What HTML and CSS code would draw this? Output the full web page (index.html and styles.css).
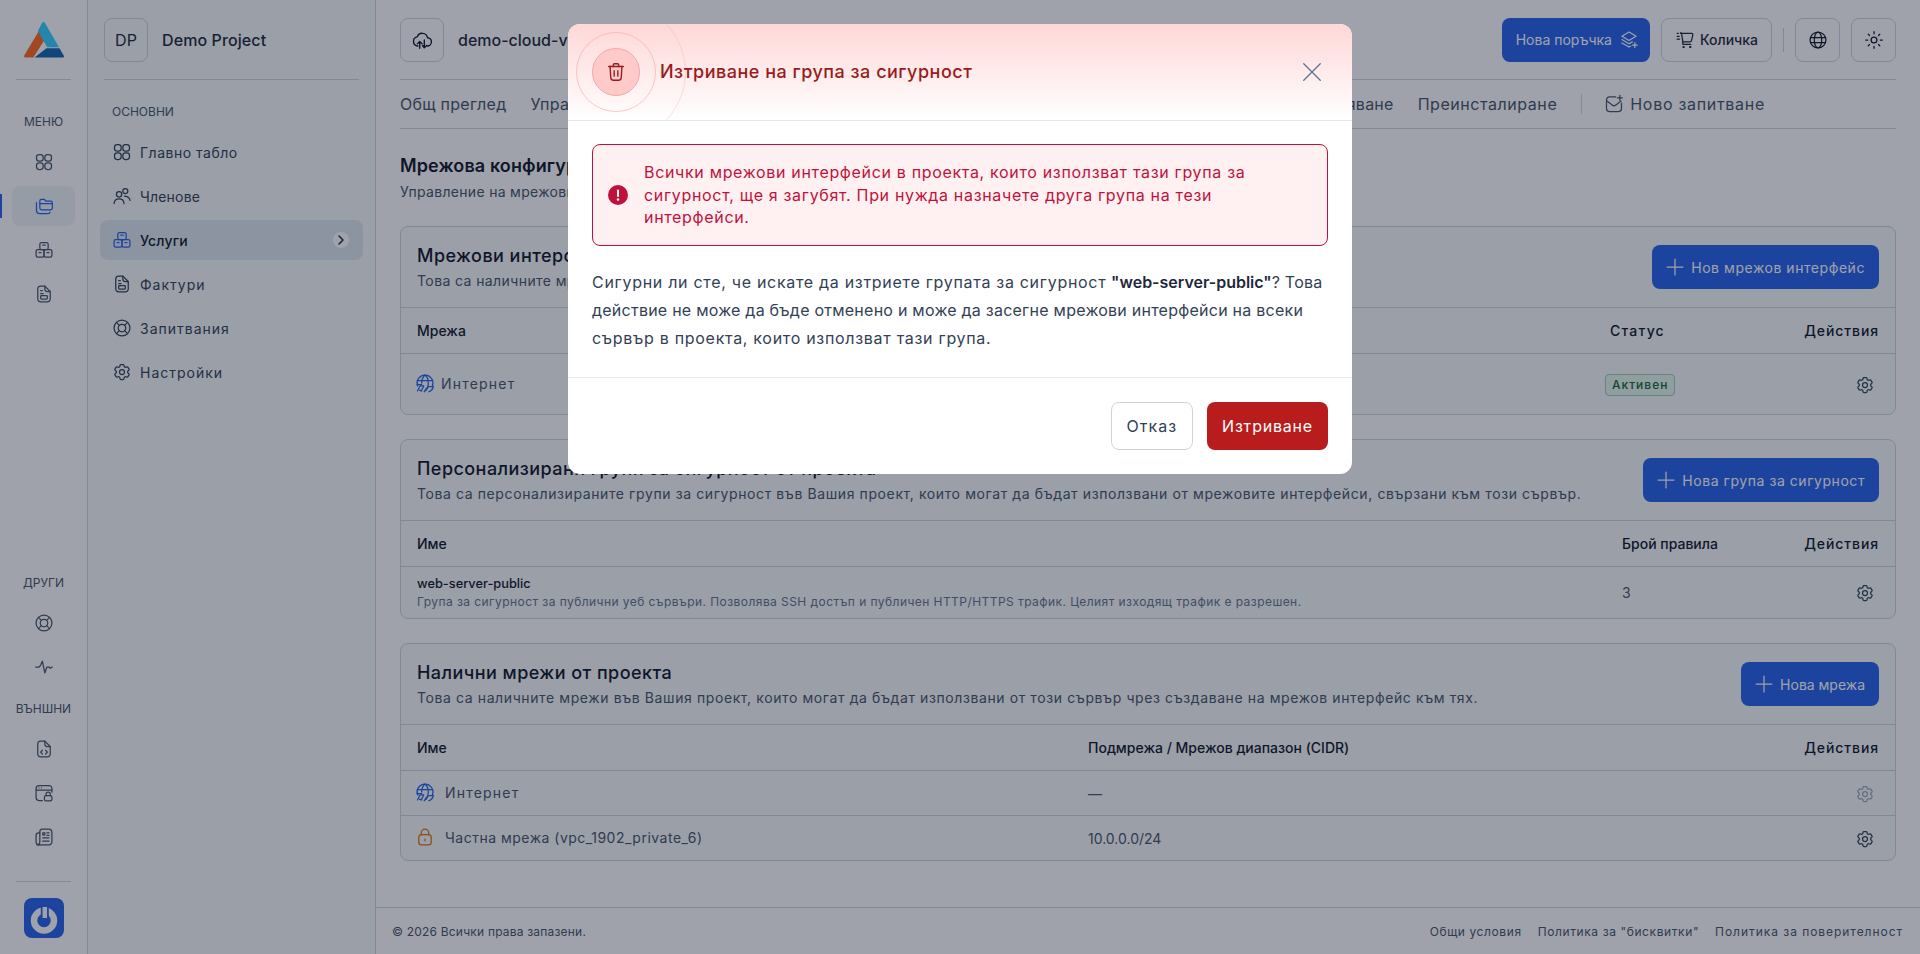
FILE: index.html
```html
<!DOCTYPE html>
<html lang="bg">
  <head>
    <meta charset="UTF-8" />
    <meta name="viewport" content="width=device-width, initial-scale=1.0" />
    <title>Мрежова конфигурация</title>
    <link rel="stylesheet" href="styles.css">
  </head>
  <body>
    <svg class="sprite" xmlns="http://www.w3.org/2000/svg">
      <symbol id="i-grid" viewBox="0 0 24 24"><rect x="3" y="3" width="8" height="8" rx="3.2"/><rect x="13" y="3" width="8" height="8" rx="3.2"/><rect x="3" y="13" width="8" height="8" rx="3.2"/><rect x="13" y="13" width="8" height="8" rx="3.2"/></symbol>
      <symbol id="i-folders" viewBox="0 0 24 24"><path d="M7 8.500V6a2 2 0 0 1 2-2h3.500l1.600 2H20a2 2 0 0 1 2 2v6.500a2 2 0 0 1-2 2H9a2 2 0 0 1-2-2z"/><path d="M7 9h15"/><path d="M3 8v9.500A3.500 3.500 0 0 0 6.500 21H17a2.500 2.500 0 0 0 2.300-1.500"/></symbol>
      <symbol id="i-boxes" viewBox="0 0 24 24"><rect x="7" y="3" width="10" height="8.500" rx="2"/><rect x="2.500" y="11.500" width="9.500" height="9" rx="2"/><rect x="12" y="11.500" width="9.500" height="9" rx="2"/><path d="M10.500 6h3M6 15h2.500M15.500 15H18"/></symbol>
      <symbol id="i-invoice" viewBox="0 0 24 24"><path d="M13 2.500H8A3.500 3.500 0 0 0 4.500 6v12A3.500 3.500 0 0 0 8 21.500h8a3.500 3.500 0 0 0 3.500-3.500V9z"/><path d="M13 2.500V6a3 3 0 0 0 3 3h3.500"/><path d="M8 8h2M8 11.500h3"/><rect x="8" y="14" width="8" height="4" rx="1"/></symbol>
      <symbol id="i-users" viewBox="0 0 24 24"><circle cx="8.500" cy="10" r="3.200"/><path d="M2.500 21c.3-3.600 2.800-5.500 6-5.500s5.700 1.900 6 5.500"/><circle cx="16" cy="6" r="3"/><path d="M15 12.200c.4.100.7.100 1 .1 3.200 0 5.200 1.700 5.700 5"/></symbol>
      <symbol id="i-lifebuoy" viewBox="0 0 24 24"><circle cx="12" cy="12" r="9.500"/><circle cx="12" cy="12" r="4.500"/><path d="M5.300 5.300l3.500 3.500M18.700 5.300l-3.500 3.500M5.300 18.700l3.500-3.500M18.700 18.700l-3.500-3.500"/></symbol>
      <symbol id="i-gear" viewBox="0 0 24 24"><path d="M9.594 3.940c.09-.542.56-.94 1.110-.94h2.593c.55 0 1.020.398 1.110.94l.213 1.281c.063.374.313.686.645.870.074.040.147.083.22.127.325.196.72.257 1.075.124l1.217-.456a1.125 1.125 0 0 1 1.370.49l1.296 2.247a1.125 1.125 0 0 1-.26 1.431l-1.003.827c-.293.241-.438.613-.43.992a7.723 7.723 0 0 1 0 .255c-.008.378.137.75.43.991l1.004.827c.424.35.534.955.26 1.430l-1.298 2.247a1.125 1.125 0 0 1-1.369.491l-1.217-.456c-.355-.133-.75-.072-1.076.124a6.470 6.470 0 0 1-.22.128c-.331.183-.581.495-.644.869l-.213 1.281c-.09.543-.56.94-1.110.94h-2.594c-.55 0-1.019-.398-1.110-.94l-.213-1.281c-.062-.374-.312-.686-.644-.870a6.520 6.520 0 0 1-.22-.127c-.325-.196-.72-.257-1.076-.124l-1.217.456a1.125 1.125 0 0 1-1.369-.49l-1.297-2.247a1.125 1.125 0 0 1 .26-1.431l1.004-.827c.292-.24.437-.613.43-.991a6.932 6.932 0 0 1 0-.255c.007-.38-.138-.751-.43-.992l-1.004-.827a1.125 1.125 0 0 1-.26-1.430l1.297-2.247a1.125 1.125 0 0 1 1.370-.491l1.216.456c.356.133.751.072 1.076-.124.072-.044.146-.086.22-.128.332-.183.582-.495.644-.869l.214-1.280z"/><circle cx="12" cy="12" r="3"/></symbol>
      <symbol id="i-pulse" viewBox="0 0 24 24"><path d="M2 12h4l1.800-1.800L10 5l3 14 2.500-7H18l1.500 1.500L22 12"/></symbol>
      <symbol id="i-filecode" viewBox="0 0 24 24"><path d="M13 2.500H8A3.500 3.500 0 0 0 4.500 6v12A3.500 3.500 0 0 0 8 21.500h8a3.500 3.500 0 0 0 3.500-3.500V9z"/><path d="M13 2.500V6a3 3 0 0 0 3 3h3.500"/><path d="M10 13.500l-2 2.300 2 2.200M14 13.500l2 2.300-2 2.200"/></symbol>
      <symbol id="i-browserlock" viewBox="0 0 24 24"><path d="M10 21H6a3.500 3.500 0 0 1-3.500-3.500v-11A3.500 3.500 0 0 1 6 3h12a3.500 3.500 0 0 1 3.500 3.500V11"/><path d="M2.500 8.500h19"/><path d="M6 5.800h.01M9 5.800h.01"/><rect x="12.500" y="15" width="9" height="6.500" rx="2"/><path d="M14.500 15v-1.500a2.500 2.500 0 0 1 5 0V15"/></symbol>
      <symbol id="i-news" viewBox="0 0 24 24"><path d="M7 21.500h11a3.500 3.500 0 0 0 3.500-3.500V6A3.500 3.500 0 0 0 18 2.500H10A3 3 0 0 0 7 5.500V18a3.500 3.500 0 0 1-3.500 3.500h3.500"/><path d="M7 7H5.500a3 3 0 0 0-3 3v8a3.500 3.500 0 0 0 3.500 3.500"/><path d="M10.500 7H13v2.500h-2.500zM15.500 7H18M15.500 10H18M10.500 13H18M10.500 17H18"/></symbol>
      <symbol id="i-cloud" viewBox="0 0 24 24"><path d="M7.500 18.500A5 5 0 0 1 6.800 8.600 5.800 5.800 0 0 1 18 9.500a4.500 4.500 0 0 1-.5 9"/><path d="M9.500 21v-7.500M7 16l2.500-2.500L12 16M14.500 12v8M12.500 18l2 2.500 2.500-2.500"/></symbol>
      <symbol id="i-layers" viewBox="0 0 24 24"><path d="M12 2.500l8.500 5-8.500 5-8.500-5z"/><path d="M3.500 11.500l8.500 5 4-2.300M3.500 15.500l8.500 5 2-1.200"/><path d="M19 15v6M16 18h6"/></symbol>
      <symbol id="i-cart" viewBox="0 0 24 24"><path d="M6.500 4H20c1 0 1.700.9 1.400 1.900l-1.500 6.500a2.500 2.500 0 0 1-2.400 1.900H9.500L8 5.200 7 3"/><path d="M9.500 14.300l-.3 1.700a1 1 0 0 0 1 1.200H19"/><path d="M2.500 4H4M2.500 7.500H5M2.500 11h3"/><path d="M10 20.500h.6M18 20.500h.6" stroke-width="2.400"/></symbol>
      <symbol id="i-globe" viewBox="0 0 24 24"><circle cx="12" cy="12" r="9.500"/><ellipse cx="12" cy="12" rx="4.500" ry="9.500"/><path d="M3 9h18M3 15h18"/></symbol>
      <symbol id="i-sun" viewBox="0 0 24 24"><circle cx="12" cy="12" r="3.500"/><path d="M12 2v2.500M12 19.500V22M2 12h2.500M19.500 12H22M5 5l1.600 1.600M17.400 17.400L19 19M5 19l1.600-1.600M17.400 6.600L19 5"/></symbol>
      <symbol id="i-mailplus" viewBox="0 0 24 24"><path d="M14 3.500H6.500A3.500 3.500 0 0 0 3 7v10.500A3.500 3.500 0 0 0 6.500 21h11a3.500 3.500 0 0 0 3.500-3.500V11"/><path d="M3.500 8.500l6.300 4.700a3.500 3.500 0 0 0 4.400 0L20.500 8.500"/><path d="M19 1.500v6M16 4.500h6"/></symbol>
      <symbol id="i-plus" viewBox="0 0 24 24"><path d="M12 2.500v19M2.500 12h19"/></symbol>
      <symbol id="i-netglobe" viewBox="0 0 24 24"><path d="M3.200 15.500A9.500 9.500 0 1 1 21 15"/><path d="M8 21.500c-.8-.200-1.700-.600-2.400-1"/><path d="M12 2.500c-2.500 2.200-4 5.500-4 9.500M12 2.500c2.700 2.300 4 5.500 4 9.500 0 3-1 6-2.500 8.500M2.800 9h18.400M2.500 14H8"/><path d="M16.500 22.500c3-1 5-3.200 5.500-6.500l-6 .5-5 6 2.500-3.800"/><path d="M3 21.500l3-6 4.500 0-3 6"/></symbol>
      <symbol id="i-lock" viewBox="0 0 24 24"><rect x="4.500" y="9" width="15" height="12.500" rx="3.500"/><path d="M7.500 9V7a4.500 4.500 0 0 1 9 0v2"/><path d="M12 14.500v2"/></symbol>
      <symbol id="i-trash" viewBox="0 0 24 24"><path d="M4 6h16"/><path d="M9 6V4.500A1.500 1.500 0 0 1 10.500 3h3A1.500 1.500 0 0 1 15 4.500V6"/><path d="M5.500 6l.8 12a3 3 0 0 0 3 3h5.400a3 3 0 0 0 3-3l.8-12"/><path d="M10 10.500v6M14 10.500v6"/></symbol>
      <symbol id="i-close" viewBox="0 0 24 24"><path d="M3 3l18 18M21 3L3 21"/></symbol>
      <symbol id="i-chevron" viewBox="0 0 24 24"><path d="M8 4l8 8-8 8"/></symbol>
    </svg>

    <div class="app">
      <!-- тясна лента с иконите -->
      <aside class="rail">
        <div class="rail-top">
          <svg class="logo" viewBox="0 0 40 36" xmlns="http://www.w3.org/2000/svg">
            <path d="M15 8.700L0.200 33.600C-.2 34.500.2 35.400 1.200 35.400H9.300L20 18.700z" fill="#ff6a1f"/>
            <path d="M14 8.700L18.300.6C18.900-.2 20.200-.2 20.700.6L35 25.300H23.300L18.300 17z" fill="#32d0ff"/>
            <path d="M10.500 35.400L22.500 26.300H35.500L39.800 33.800C40.300 34.600 39.700 35.400 38.800 35.400z" fill="#1464ac"/>
          </svg>
        </div>
        <div class="rail-label rail-first">МЕНЮ</div>
        <nav class="rail-nav">
          <a class="rail-btn"><svg class="icon"><use href="#i-grid"/></svg></a>
          <a class="rail-btn is-active"><svg class="icon"><use href="#i-folders"/></svg></a>
          <a class="rail-btn"><svg class="icon"><use href="#i-boxes"/></svg></a>
          <a class="rail-btn"><svg class="icon"><use href="#i-invoice"/></svg></a>
        </nav>
        <div class="rail-bottom">
          <div class="rail-label">ДРУГИ</div>
          <nav class="rail-nav">
            <a class="rail-btn"><svg class="icon"><use href="#i-lifebuoy"/></svg></a>
            <a class="rail-btn"><svg class="icon"><use href="#i-pulse"/></svg></a>
          </nav>
          <div class="rail-label rail-label-gap">ВЪНШНИ</div>
          <nav class="rail-nav">
            <a class="rail-btn"><svg class="icon"><use href="#i-filecode"/></svg></a>
            <a class="rail-btn"><svg class="icon"><use href="#i-browserlock"/></svg></a>
            <a class="rail-btn"><svg class="icon"><use href="#i-news"/></svg></a>
          </nav>
          <div class="rail-foot">
            <div class="power">
              <svg viewBox="0 0 40 40" xmlns="http://www.w3.org/2000/svg">
                <circle cx="20" cy="22.500" r="10" fill="none" stroke="#fff" stroke-width="6.500"/>
                <path d="M20.800 5v14" fill="none" stroke="#2563eb" stroke-width="8"/>
                <path d="M20.800 9v11" fill="none" stroke="#fff" stroke-width="4.500"/>
              </svg>
            </div>
          </div>
        </div>
      </aside>

      <aside class="panel">
        <div class="panel-top">
          <span class="square-btn initials">DP</span>
          <span class="project-name">Demo Project</span>
        </div>
        <div class="panel-label">ОСНОВНИ</div>
        <nav class="menu">
          <a class="menu-item"><svg class="icon"><use href="#i-grid"/></svg>Главно табло</a>
          <a class="menu-item menu-narrow"><svg class="icon"><use href="#i-users"/></svg>Членове</a>
          <a class="menu-item is-active"><svg class="icon"><use href="#i-boxes"/></svg>Услуги<span class="menu-arrow"><svg class="icon"><use href="#i-chevron"/></svg></span></a>
          <a class="menu-item menu-wide"><svg class="icon"><use href="#i-invoice"/></svg>Фактури</a>
          <a class="menu-item menu-wide"><svg class="icon"><use href="#i-lifebuoy"/></svg>Запитвания</a>
          <a class="menu-item menu-wide"><svg class="icon"><use href="#i-gear"/></svg>Настройки</a>
        </nav>
      </aside>

      <div class="main">
        <div class="main-inner">
          <header class="topbar">
            <span class="square-btn"><svg class="icon icon-22"><use href="#i-cloud"/></svg></span>
            <span class="server-name">demo-cloud-vps-01</span>
            <div class="topbar-actions">
              <a class="btn btn-primary btn-order">Нова поръчка<svg class="icon"><use href="#i-layers"/></svg></a>
              <a class="btn btn-outline"><svg class="icon"><use href="#i-cart"/></svg>Количка</a>
              <span class="vline"></span>
              <span class="square-btn square-wide"><svg class="icon"><use href="#i-globe"/></svg></span>
              <span class="square-btn square-wide"><svg class="icon"><use href="#i-sun"/></svg></span>
            </div>
          </header>

          <nav class="tabs">
            <a>Общ преглед</a>
            <a>Управление</a>
            <a>Конзола</a>
            <a>Мрежа и IP</a>
            <a>Дискове</a>
            <a>Защитна стена</a>
            <a>Резервни копия</a>
            <a>Преоразмеряване</a>
            <a class="tab-wide">Преинсталиране</a>
            <span class="vline"></span>
            <a class="tab-icon"><svg class="icon"><use href="#i-mailplus"/></svg>Ново запитване</a>
          </nav>

          <section class="intro">
            <h1>Мрежова конфигурация</h1>
            <p>Управление на мрежовите интерфейси и групите за сигурност на сървъра.</p>
          </section>

          <section class="card">
            <div class="card-head">
              <div>
                <h2>Мрежови интерфейси</h2>
                <p class="sub-tight">Това са наличните мрежови интерфейси на този сървър.</p>
              </div>
              <a class="btn btn-primary btn-add"><svg class="icon"><use href="#i-plus"/></svg>Нов мрежов интерфейс</a>
            </div>
            <table class="tbl tbl-status">
              <thead><tr><th>Мрежа</th><th class="wide">Статус</th><th class="wide">Действия</th></tr></thead>
              <tbody>
                <tr class="row-61">
                  <td><span class="net wide"><svg class="icon icon-blue"><use href="#i-netglobe"/></svg>Интернет</span></td>
                  <td><span class="badge">Активен</span></td>
                  <td><svg class="icon icon-gear"><use href="#i-gear"/></svg></td>
                </tr>
              </tbody>
            </table>
          </section>

          <section class="card">
            <div class="card-head">
              <div>
                <h2>Персонализирани групи за сигурност от проекта</h2>
                <p>Това са персонализираните групи за сигурност във Вашия проект, които могат да бъдат използвани от мрежовите интерфейси, свързани към този сървър.</p>
              </div>
              <a class="btn btn-primary btn-add"><svg class="icon"><use href="#i-plus"/></svg>Нова група за сигурност</a>
            </div>
            <table class="tbl tbl-rules">
              <thead><tr><th>Име</th><th>Брой правила</th><th class="wide">Действия</th></tr></thead>
              <tbody>
                <tr class="row-52">
                  <td>
                    <div class="group-name">web-server-public</div>
                    <div class="group-desc">Група за сигурност за публични уеб сървъри. Позволява SSH достъп и публичен HTTP/HTTPS трафик. Целият изходящ трафик е разрешен.</div>
                  </td>
                  <td>3</td>
                  <td><svg class="icon icon-gear"><use href="#i-gear"/></svg></td>
                </tr>
              </tbody>
            </table>
          </section>

          <section class="card">
            <div class="card-head">
              <div>
                <h2>Налични мрежи от проекта</h2>
                <p>Това са наличните мрежи във Вашия проект, които могат да бъдат използвани от този сървър чрез създаване на мрежов интерфейс към тях.</p>
              </div>
              <a class="btn btn-primary btn-add btn-short"><svg class="icon"><use href="#i-plus"/></svg>Нова мрежа</a>
            </div>
            <table class="tbl tbl-nets">
              <thead><tr><th>Име</th><th>Подмрежа / Мрежов диапазон (CIDR)</th><th class="wide">Действия</th></tr></thead>
              <tbody>
                <tr>
                  <td><span class="net net-wide wide"><svg class="icon icon-blue"><use href="#i-netglobe"/></svg>Интернет</span></td>
                  <td>—</td>
                  <td><svg class="icon icon-gear is-muted"><use href="#i-gear"/></svg></td>
                </tr>
                <tr>
                  <td><span class="net net-wide"><svg class="icon icon-amber"><use href="#i-lock"/></svg>Частна мрежа (vpc_1902_private_6)</span></td>
                  <td class="plain">10.0.0.0/24</td>
                  <td><svg class="icon icon-gear"><use href="#i-gear"/></svg></td>
                </tr>
              </tbody>
            </table>
          </section>
        </div>

        <footer class="footer">
          <span>© 2026 Всички права запазени.</span>
          <div class="footer-links">
            <a>Общи условия</a>
            <a>Политика за "бисквитки"</a>
            <a class="link-wide">Политика за поверителност</a>
          </div>
        </footer>
      </div>
    </div>

    <div class="overlay">
      <div class="modal">
        <div class="modal-head">
          <span class="ring ring-2"></span>
          <span class="ring ring-1"></span>
          <span class="modal-badge"><svg class="icon icon-22"><use href="#i-trash"/></svg></span>
          <h3>Изтриване на група за сигурност</h3>
          <button class="modal-close"><svg class="icon icon-22"><use href="#i-close"/></svg></button>
        </div>
        <div class="modal-body">
          <div class="alert">
            <svg class="alert-icon" viewBox="0 0 20 20" xmlns="http://www.w3.org/2000/svg"><circle cx="10" cy="10" r="10" fill="#be123c"/><rect x="9" y="4.500" width="2" height="7.500" rx="1" fill="#fff"/><circle cx="10" cy="14.500" r="1.200" fill="#fff"/></svg>
            <p>Всички мрежови интерфейси в проекта, които използват тази група за сигурност, ще я загубят. При нужда назначете друга група на тези интерфейси.</p>
          </div>
          <p class="confirm"><span class="confirm-wide">Сигурни ли сте, че искате да изтриете групата за сигурност</span> <strong>"web-server-public"</strong>? Това действие не може да бъде отменено и може да засегне мрежови интерфейси на всеки <span class="confirm-wide">сървър в проекта, които използват тази група.</span></p>
        </div>
        <div class="modal-foot">
          <button class="btn btn-cancel">Отказ</button>
          <button class="btn btn-danger">Изтриване</button>
        </div>
      </div>
    </div>
  </body>
</html>
```

FILE: styles.css
```css
:root {
  --border: #cbd5e1;
  --text: #0f172a;
  --muted: #475569;
  --blue: #2563eb;
}

* {
  margin: 0;
  padding: 0;
  box-sizing: border-box;
}

html {
  font-size: 14px;
}

body {
  width: 100vw;
  height: 100vh;
  overflow: hidden;
  background-color: #fff;
  color: var(--text);
  font-family: Inter, 'Noto Sans', sans-serif;
}

.sprite {
  display: none;
}

.icon {
  width: 20px;
  height: 20px;
  flex: none;
  fill: none;
  stroke: currentColor;
  stroke-width: 1.5;
  stroke-linecap: round;
  stroke-linejoin: round;
}

.icon-22 { width: 22px; height: 22px; }
.icon-blue { color: var(--blue); }
.icon-amber { color: #d97706; }

.app {
  display: flex;
  height: 100%;
}

/* лента с иконите */
.rail {
  display: flex;
  flex-direction: column;
  flex: none;
  width: 88px;
  border-right: 1px solid var(--border);
  color: var(--muted);
}

.rail-top {
  display: flex;
  justify-content: center;
  height: 80px;
  margin: 0 16px;
  padding-top: 22px;
  border-bottom: 1px solid var(--border);
}

.logo {
  width: 40px;
  height: 36px;
}

.rail-label {
  height: 16px;
  margin-bottom: 13px;
  font-size: 12px;
  line-height: 18px;
  text-align: center;
  color: #475569;
}

.rail-first {
  margin-top: 33px;
}

.rail-label-gap {
  margin-top: 13px;
}

.rail-nav {
  display: flex;
  flex-direction: column;
  gap: 4px;
  padding: 0 12px;
}

.rail-btn {
  position: relative;
  display: flex;
  align-items: center;
  justify-content: center;
  height: 40px;
  border-radius: 8px;
}

.rail-btn.is-active {
  background-color: #f1f5f9;
  color: var(--blue);
}

.rail-btn.is-active::before {
  content: '';
  position: absolute;
  left: -12px;
  top: 8px;
  width: 2px;
  height: 24px;
  background-color: var(--blue);
}

.rail-bottom {
  margin-top: auto;
}

.rail-foot {
  height: 73px;
  margin: 24px 16px 0;
  padding-top: 16px;
  border-top: 1px solid var(--border);
}

.power {
  width: 40px;
  height: 40px;
  margin: 0 auto;
  border-radius: 8px;
  background-color: var(--blue);
}

.power svg {
  display: block;
  width: 40px;
  height: 40px;
}

/* панел с менюто */
.panel {
  flex: none;
  width: 288px;
  border-right: 1px solid var(--border);
  background-color: #f8fafc;
}

.panel-top {
  display: flex;
  align-items: center;
  gap: 14px;
  height: 80px;
  margin: 0 16px;
  border-bottom: 1px solid var(--border);
}

.square-btn {
  display: flex;
  flex: none;
  align-items: center;
  justify-content: center;
  width: 44px;
  height: 44px;
  border: 1px solid var(--border);
  border-radius: 8px;
}

.square-wide {
  width: 45px;
}

.initials {
  font-size: 16px;
  color: #1e293b;
}

.project-name {
  font-size: 16px;
  font-weight: 500;
  letter-spacing: .1px;
  color: #1e293b;
}

.panel-label {
  margin: 23px 24px 13px;
  height: 16px;
  font-size: 12px;
  line-height: 18px;
  color: var(--muted);
}

.menu {
  display: flex;
  flex-direction: column;
  gap: 4px;
  padding: 0 12px;
}

.menu-item {
  display: flex;
  align-items: center;
  gap: 8px;
  height: 40px;
  padding: 0 14px 0 12px;
  border-radius: 8px;
  font-size: 14px;
  letter-spacing: .5px;
  color: #334155;
}

.menu-wide {
  letter-spacing: 1px;
}

.menu-narrow {
  letter-spacing: .2px;
}

.menu-item.is-active {
  background-color: #e2e8f0;
  color: #0f172a;
  font-weight: 500;
  letter-spacing: .2px;
}

.menu-item.is-active > .icon {
  color: var(--blue);
}

.menu-arrow {
  display: flex;
  align-items: center;
  justify-content: center;
  width: 16px;
  height: 16px;
  margin-left: auto;
  border-radius: 50%;
  background-color: #fff;
}

.menu-arrow .icon {
  width: 12px;
  height: 12px;
  stroke-width: 3;
  color: #1e293b;
}

/* основна част */
.main {
  display: flex;
  flex: 1;
  flex-direction: column;
  min-width: 0;
}

.main-inner {
  flex: 1;
  min-height: 0;
  padding: 0 24px;
}

.topbar {
  display: flex;
  align-items: center;
  height: 80px;
  border-bottom: 1px solid var(--border);
}

.server-name {
  margin-left: 14px;
  font-size: 16px;
  font-weight: 500;
  color: #1e293b;
}

.topbar-actions {
  display: flex;
  align-items: center;
  gap: 11px;
  margin-left: auto;
}

.vline {
  width: 1px;
  height: 24px;
  background-color: var(--border);
}

.btn {
  display: inline-flex;
  align-items: center;
  justify-content: center;
  gap: 5px;
  height: 44px;
  padding: 0 13px;
  border: 1px solid transparent;
  border-radius: 8px;
  font-family: inherit;
  font-size: 14px;
  font-weight: 500;
}

.btn-primary {
  background-color: var(--blue);
  font-weight: 400;
  color: #fff;
}

.btn-order {
  gap: 7px;
  padding: 0 10px 0 13px;
}

.btn-outline {
  border-color: var(--border);
  color: #1e293b;
}

.btn-add {
  flex: none;
  gap: 6px;
  padding: 0 13px 0 12px;
  letter-spacing: .55px;
}

.btn-short {
  letter-spacing: 0;
}

.tabs {
  display: flex;
  align-items: center;
  gap: 24px;
  height: 49px;
  border-bottom: 1px solid var(--border);
  font-size: 16px;
  letter-spacing: .25px;
  white-space: nowrap;
  color: var(--muted);
}

.tabs .vline {
  height: 20px;
}

.tab-wide {
  letter-spacing: .55px;
}

.tab-icon {
  display: flex;
  align-items: center;
  gap: 6px;
  margin-left: -2px;
  letter-spacing: .7px;
}

.intro {
  padding: 23px 0 24px;
}

.intro h1 {
  font-size: 18px;
  line-height: 28px;
  font-weight: 600;
  letter-spacing: .1px;
  color: #0f172a;
}

.intro p {
  margin-top: 2px;
  font-size: 14px;
  line-height: 20px;
  letter-spacing: .3px;
  color: var(--muted);
}

.card {
  margin-bottom: 24px;
  overflow: hidden;
  border: 1px solid var(--border);
  border-radius: 8px;
  background-color: #f8fafc;
}

.card-head {
  display: flex;
  align-items: center;
  justify-content: space-between;
  height: 81px;
  padding: 0 16px;
  border-bottom: 1px solid var(--border);
}

.card-head h2 {
  margin-top: -1px;
  font-size: 18px;
  line-height: 28px;
  font-weight: 500;
  letter-spacing: .45px;
  color: #0f172a;
}

.card-head p {
  margin-top: 1px;
  font-size: 14px;
  line-height: 20px;
  letter-spacing: .6px;
  color: var(--muted);
}

.card-head .sub-tight {
  letter-spacing: .4px;
}

.tbl {
  width: 100%;
  border-collapse: collapse;
  table-layout: fixed;
  font-size: 14px;
}

.tbl th {
  height: 45px;
  padding: 0 16px;
  border-bottom: 1px solid var(--border);
  font-weight: 500;
  text-align: left;
  color: #0f172a;
}

.tbl td {
  height: 45px;
  padding: 2px 16px 0;
  border-bottom: 1px solid var(--border);
  letter-spacing: .5px;
  color: var(--muted);
}

.tbl td.plain {
  letter-spacing: 0;
}

.tbl tbody tr:last-child td {
  border-bottom: 0;
}

.tbl tbody tr.row-61 td { height: 61px; }
.tbl tbody tr.row-52 td { height: 52px; padding-top: 1px; }

.tbl th:last-child,
.tbl td:last-child {
  width: 130px;
  text-align: right;
}

.tbl th.wide,
.tbl td .wide {
  letter-spacing: 1.2px;
}

.tbl th.wide:last-child {
  letter-spacing: .9px;
}

.tbl-status th:nth-child(2) { width: 171px; }
.tbl-rules th:nth-child(2) { width: 159px; }
.tbl-nets th:first-child { width: 671px; }
.tbl-nets th:nth-child(2) { width: auto; }

.icon-gear {
  display: inline-block;
  margin-right: 4px;
  color: #334155;
  vertical-align: middle;
}

.icon-gear.is-muted {
  color: #64748b;
  opacity: .6;
}

.net {
  display: inline-flex;
  align-items: center;
  gap: 6px;
  margin-left: -2px;
}

.net-wide {
  gap: 10px;
}

.badge {
  display: inline-block;
  margin-left: -5px;
  padding: 2px 6px;
  border: 1px solid #9ccfb4;
  border-radius: 4px;
  background-color: #e6f9ee;
  font-size: 12px;
  line-height: 16px;
  font-weight: 500;
  letter-spacing: 1px;
  color: #166534;
}

.group-name {
  font-size: 12.8px;
  line-height: 16px;
  font-weight: 500;
  letter-spacing: 0;
  color: #0f172a;
}

.group-desc {
  margin-top: 2px;
  font-size: 12px;
  line-height: 16px;
  letter-spacing: .44px;
  color: #64748b;
}

.footer {
  display: flex;
  flex: none;
  align-items: center;
  justify-content: space-between;
  height: 47px;
  padding: 0 17px 0 16px;
  border-top: 1px solid var(--border);
  font-size: 12px;
  color: var(--muted);
}

.footer > span {
  letter-spacing: .2px;
}

.footer-links {
  display: flex;
  gap: 16px;
  letter-spacing: .6px;
}

.link-wide {
  letter-spacing: .95px;
}

/* модален прозорец */
.overlay {
  position: fixed;
  inset: 0;
  display: flex;
  justify-content: center;
  align-items: flex-start;
  padding-top: 24px;
  background-color: rgba(15, 23, 42, .4);
}

.modal {
  width: 784px;
  overflow: hidden;
  border-radius: 12px;
  background-color: #fff;
}

.modal-head {
  position: relative;
  display: flex;
  align-items: center;
  height: 97px;
  padding: 0 24px;
  overflow: hidden;
  border-bottom: 1px solid #e2e8f0;
  background: linear-gradient(to bottom, #fed7d7, #fff);
}

.ring {
  position: absolute;
  border-radius: 50%;
  border: 1px solid #fca5a5;
}

.ring-1 {
  left: 8px;
  top: 8px;
  width: 80px;
  height: 80px;
  opacity: .6;
}

.ring-2 {
  left: -22px;
  top: -22px;
  width: 140px;
  height: 140px;
  opacity: .35;
}

.modal-badge {
  position: relative;
  display: flex;
  flex: none;
  align-items: center;
  justify-content: center;
  width: 48px;
  height: 48px;
  border: 1px solid #fca5a5;
  border-radius: 50%;
  background-color: #fecaca;
  color: #991b1b;
}

.modal-head h3 {
  position: relative;
  margin-left: 20px;
  font-size: 18px;
  line-height: 28px;
  font-weight: 500;
  letter-spacing: .5px;
  color: #991b1b;
}

.modal-close {
  display: flex;
  align-items: center;
  justify-content: center;
  width: 32px;
  height: 32px;
  margin-left: auto;
  border: 0;
  background: none;
  color: #64748b;
}

.modal-body {
  padding: 23px 24px 25px;
  border-bottom: 1px solid #e2e8f0;
}

.alert {
  display: flex;
  align-items: center;
  gap: 16px;
  padding: 16px 15px;
  border: 1px solid #be123c;
  border-radius: 8px;
  background-color: #fff1f2;
  font-size: 16px;
  line-height: 22.5px;
  letter-spacing: .67px;
  color: #be123c;
}

.alert p {
  max-width: 650px;
}

.alert-icon {
  flex: none;
  width: 20px;
  height: 20px;
}

.confirm {
  margin-top: 22px;
  font-size: 16px;
  line-height: 28px;
  letter-spacing: .24px;
  color: #334155;
}

.confirm-wide {
  letter-spacing: .7px;
}

.confirm strong {
  font-weight: 600;
  letter-spacing: 0;
  color: #1e293b;
}

.modal-foot {
  display: flex;
  justify-content: flex-end;
  gap: 14px;
  padding: 24px;
}

.btn-cancel {
  height: 48px;
  padding: 0 15px;
  border-color: var(--border);
  background-color: #fff;
  font-size: 16px;
  font-weight: 400;
  letter-spacing: 1px;
  color: #334155;
}

.btn-danger {
  height: 48px;
  padding: 0 14px;
  background-color: #b91c1c;
  font-size: 16px;
  font-weight: 400;
  letter-spacing: .8px;
  color: #fff;
}
```
